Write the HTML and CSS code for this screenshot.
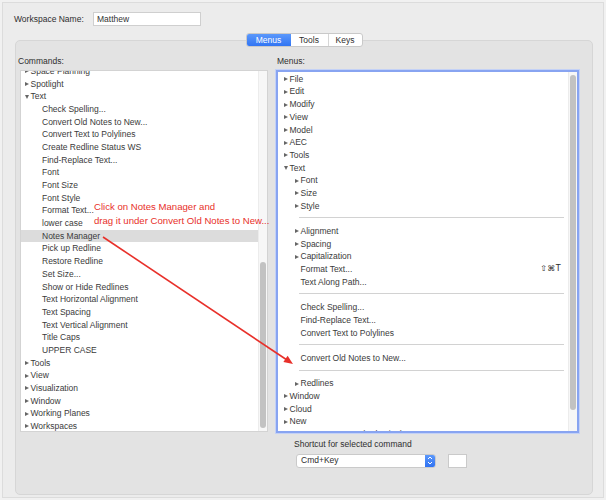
FILE: index.html
```html
<!DOCTYPE html>
<html>
<head>
<meta charset="utf-8">
<link rel="stylesheet" href="styles.css">
</head>
<body>
<div class="window">
  <div class="name-row">
    <span class="name-label">Workspace Name:</span>
    <div class="name-input">Matthew</div>
  </div>
  <div class="tabs">
    <div class="seg">
      <span class="seg-item active">Menus</span>
      <span class="seg-item">Tools</span>
      <span class="seg-item">Keys</span>
    </div>
  </div>
  <div class="group">
    <div class="col-left">
      <div class="label label-left">Commands:</div>
      <div class="list list-commands">
        <ul class="rows rows-commands">
          <li class="row l0 closed">Space Planning</li>
          <li class="row l0 closed">Spotlight</li>
          <li class="row l0 open">Text</li>
          <li class="row l1">Check Spelling...</li>
          <li class="row l1">Convert Old Notes to New...</li>
          <li class="row l1">Convert Text to Polylines</li>
          <li class="row l1">Create Redline Status WS</li>
          <li class="row l1">Find-Replace Text...</li>
          <li class="row l1">Font</li>
          <li class="row l1">Font Size</li>
          <li class="row l1">Font Style</li>
          <li class="row l1">Format Text...</li>
          <li class="row l1">lower case</li>
          <li class="row l1 selected">Notes Manager</li>
          <li class="row l1">Pick up Redline</li>
          <li class="row l1">Restore Redline</li>
          <li class="row l1">Set Size...</li>
          <li class="row l1">Show or Hide Redlines</li>
          <li class="row l1">Text Horizontal Alignment</li>
          <li class="row l1">Text Spacing</li>
          <li class="row l1">Text Vertical Alignment</li>
          <li class="row l1">Title Caps</li>
          <li class="row l1">UPPER CASE</li>
          <li class="row l0 closed">Tools</li>
          <li class="row l0 closed">View</li>
          <li class="row l0 closed">Visualization</li>
          <li class="row l0 closed">Window</li>
          <li class="row l0 closed">Working Planes</li>
          <li class="row l0 closed">Workspaces</li>
        </ul>
        <div class="track track-left"><div class="thumb thumb-left"></div></div>
      </div>
    </div>
    <div class="col-right">
      <div class="label label-right">Menus:</div>
      <div class="list list-menus">
        <ul class="rows rows-menus">
          <li class="row m0 closed">File</li>
          <li class="row m0 closed">Edit</li>
          <li class="row m0 closed">Modify</li>
          <li class="row m0 closed">View</li>
          <li class="row m0 closed">Model</li>
          <li class="row m0 closed">AEC</li>
          <li class="row m0 closed">Tools</li>
          <li class="row m0 open">Text</li>
          <li class="row m1 closed">Font</li>
          <li class="row m1 closed">Size</li>
          <li class="row m1 closed">Style</li>
          <li class="sep"></li>
          <li class="row m1 closed">Alignment</li>
          <li class="row m1 closed">Spacing</li>
          <li class="row m1 closed">Capitalization</li>
          <li class="row m1 plain"><span>Format Text...</span><span class="key">⇧⌘T</span></li>
          <li class="row m1 plain">Text Along Path...</li>
          <li class="sep"></li>
          <li class="row m1 plain">Check Spelling...</li>
          <li class="row m1 plain">Find-Replace Text...</li>
          <li class="row m1 plain">Convert Text to Polylines</li>
          <li class="sep"></li>
          <li class="row m1 plain">Convert Old Notes to New...</li>
          <li class="sep"></li>
          <li class="row m1 closed">Redlines</li>
          <li class="row m0 closed">Window</li>
          <li class="row m0 closed">Cloud</li>
          <li class="row m0 closed">New</li>
          <li class="row m0 closed">Document Context (Selection)</li>
        </ul>
        <div class="track track-right"><div class="thumb thumb-right"></div></div>
      </div>
      <div class="shortcut-label">Shortcut for selected command</div>
      <div class="shortcut-row">
        <div class="popup">
          <span class="popup-text">Cmd+Key</span>
          <span class="stepper">
            <svg width="10" height="13" viewBox="0 0 10 13">
              <path d="M3 5 L5 3 L7 5" fill="none" stroke="#fff" stroke-width="1"/>
              <path d="M3 8 L5 10 L7 8" fill="none" stroke="#fff" stroke-width="1"/>
            </svg>
          </span>
        </div>
        <div class="keybox"></div>
      </div>
    </div>
  </div>
</div>

<div class="note">
  <div>Click on Notes Manager and</div>
  <div>drag it under Convert Old Notes to New...</div>
</div>
<svg class="arrow" width="606" height="500" viewBox="0 0 606 500">
  <line x1="103" y1="237" x2="287" y2="360" stroke="#e8302a" stroke-width="1.6"/>
  <polygon points="293,364 283.4,362 287.6,355.8" fill="#e8302a"/>
</svg>
</body>
</html>
```

FILE: styles.css
```css
* { box-sizing: border-box; }
html, body { margin: 0; padding: 0; }
body {
  width: 606px;
  height: 500px;
  background: #f1f1f1;
  font-family: "Liberation Sans", Arial, sans-serif;
  font-size: 8.5px;
  color: #3a3a3a;
  overflow: hidden;
  position: relative;
}
ul { list-style: none; margin: 0; padding: 0; }

.window {
  margin: 2px;
  height: 496px;
  border: 1px solid #dcdcdc;
  background: #ececec;
}

.name-row {
  display: flex;
  align-items: center;
  height: 14px;
  margin-top: 8.5px;
  padding-left: 11px;
}
.name-label { width: 79px; color: #2e2e2e; }
.name-input {
  width: 108px;
  height: 14px;
  background: #fff;
  border: 1px solid #cfcfcf;
  padding-left: 3px;
  line-height: 12px;
  color: #333;
}

.tabs {
  display: flex;
  justify-content: center;
  margin-top: 7.5px;
  height: 14px;
  position: relative;
  z-index: 1;
  padding-left: 2px;
}
.seg {
  display: flex;
  height: 14px;
  border: 1px solid #c9c9c9;
  border-radius: 3px;
  background: #fff;
  overflow: hidden;
}
.seg-item {
  display: flex;
  align-items: center;
  justify-content: center;
  height: 12px;
  color: #2e2e2e;
  border-left: 1px solid #d6d6d6;
}
.seg-item:nth-child(1) { width: 44px; border-left: none; }
.seg-item:nth-child(2) { width: 37px; border-left: none; }
.seg-item:nth-child(3) { width: 34px; }
.seg-item.active {
  color: #fff;
  background: linear-gradient(#5b98fb, #3175f3);
}

.group {
  display: flex;
  margin-top: -7px;
  margin-left: 12px;
  width: 578px;
  height: 455px;
  border: 1px solid #d6d6d6;
  border-radius: 5px;
  background: #e3e3e3;
  padding: 15px 0 0 4px;
}

.col-left { width: 248px; }
.col-right { width: 303px; margin-left: 8px; }

.label {
  height: 11px;
  line-height: 11px;
  margin-bottom: 3px;
  color: #2e2e2e;
}
.label-left { margin-left: -2px; }
.label-right { margin-left: 1px; }

.list {
  position: relative;
  background: #fff;
  overflow: hidden;
}
.list-commands {
  height: 362px;
  border: 1px solid #d3d3d3;
}
.list-menus {
  height: 363px;
  border: 2px solid #88a4f1;
  box-shadow: 0 0 0 1px #c3d1f6;
}

.rows-commands { margin-top: -6.2px; }
.rows-menus { margin-top: 0.8px; }

.row {
  height: 12.7px;
  line-height: 12.7px;
  white-space: nowrap;
  display: flex;
  align-items: center;
}
.row.closed::before,
.row.open::before {
  content: "";
  display: inline-block;
  width: 0;
  height: 0;
  margin-right: 1.5px;
}
.row.closed::before {
  border-left: 4.5px solid #666;
  border-top: 2.5px solid transparent;
  border-bottom: 2.5px solid transparent;
}
.row.open::before {
  border-top: 4.5px solid #666;
  border-left: 2.5px solid transparent;
  border-right: 2.5px solid transparent;
}

.l0 { padding-left: 4px; }
.l1 { padding-left: 21px; }
.selected { background: #dcdcdc; }

.m0 { padding-left: 6px; }
.m1 { padding-left: 17px; }
.m1.plain { padding-left: 22.5px; justify-content: space-between; padding-right: 16px; }
.key { font-family: "DejaVu Sans", sans-serif; font-size: 8px; color: #2a2a2a; letter-spacing: 0.4px; }

.sep {
  height: 6px;
  margin: 0 13px 6.7px 21px;
  border-bottom: 1px solid #d2d2d2;
}

.track {
  position: absolute;
  top: 0;
  bottom: 0;
  width: 9px;
  background: #f7f7f7;
  border-left: 1px solid #ececec;
}
.track-left { right: 0; }
.track-right { right: 0; width: 9px; }
.thumb {
  position: absolute;
  width: 6px;
  border-radius: 3px;
  background: #c2c2c2;
}
.thumb-left { left: 1px; top: 191px; height: 166px; }
.thumb-right { left: 1px; top: 3px; height: 335px; }

.shortcut-label {
  margin-top: 5.5px;
  margin-left: 18px;
  height: 11px;
  line-height: 11px;
  color: #2e2e2e;
}
.shortcut-row {
  display: flex;
  margin-top: 4.5px;
  margin-left: 20px;
  gap: 12px;
}
.popup {
  display: flex;
  width: 140px;
  height: 13.5px;
  background: #fff;
  border: 1px solid #cacaca;
  border-radius: 3px;
  overflow: hidden;
}
.popup-text {
  flex: 1;
  padding-left: 4px;
  line-height: 11.5px;
  color: #2e2e2e;
}
.stepper {
  width: 10px;
  display: flex;
  align-items: center;
  justify-content: center;
  background: linear-gradient(#5b98fb, #2f72f2);
}
.keybox {
  width: 19px;
  height: 14px;
  margin-top: -0.5px;
  background: #fff;
  border: 1px solid #cacaca;
}

.note {
  position: absolute;
  left: 94px;
  top: 200px;
  color: #e8302a;
  font-family: "Liberation Sans", Arial, sans-serif;
  font-size: 9.6px;
  line-height: 13.5px;
}
.arrow {
  position: absolute;
  left: 0;
  top: 0;
  pointer-events: none;
}
```
